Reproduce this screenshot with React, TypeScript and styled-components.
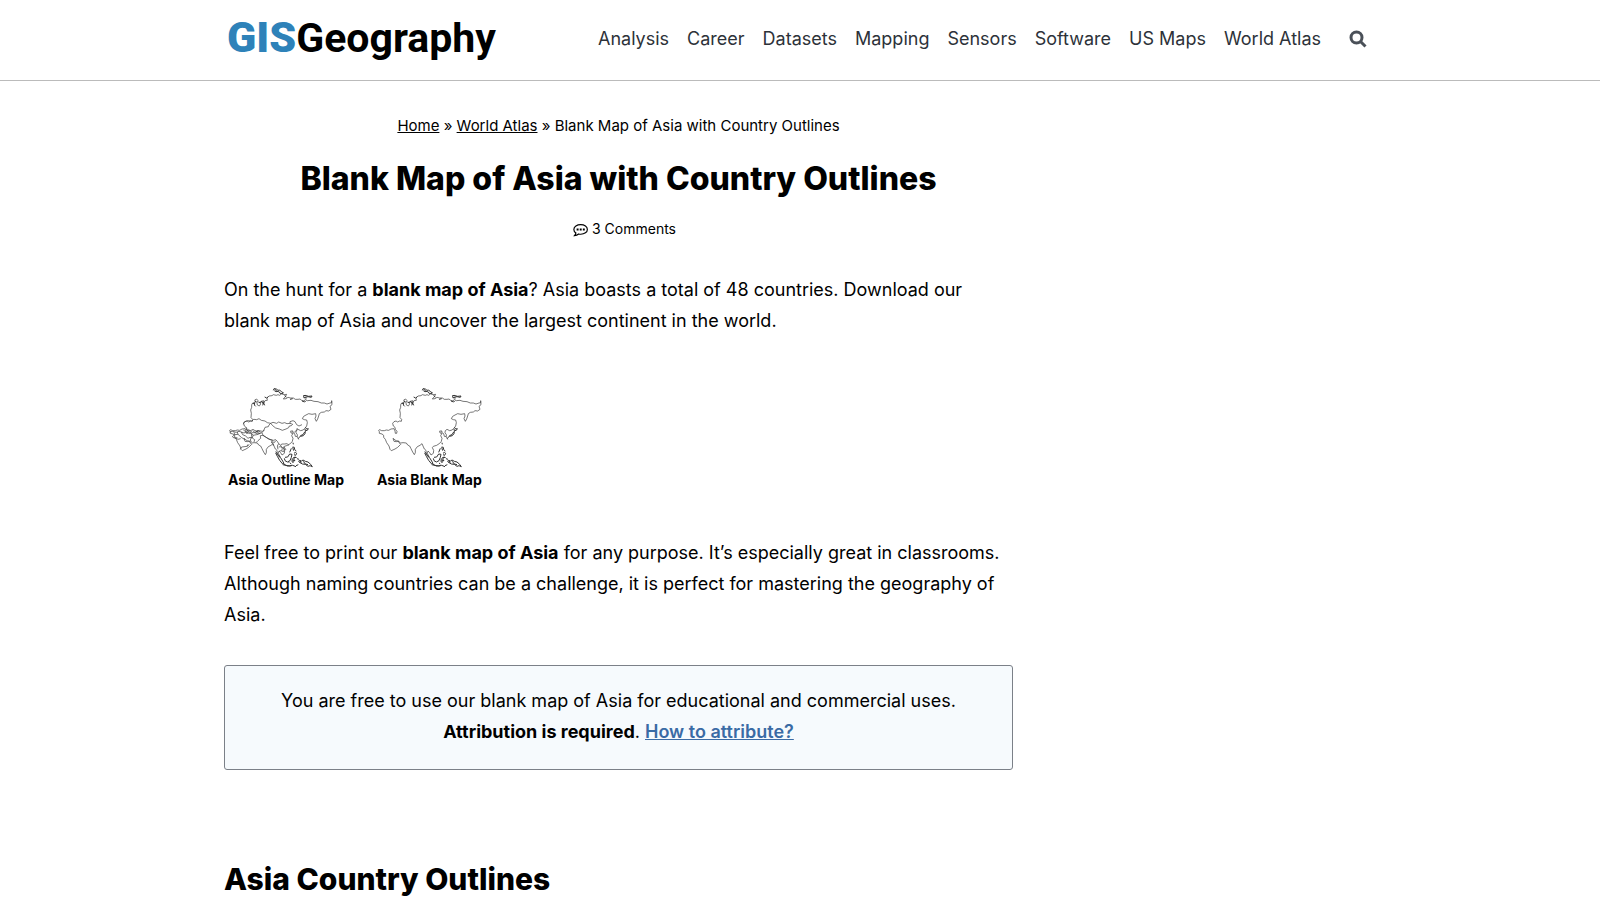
import React from "react";
import styled, { createGlobalStyle } from "styled-components";

const GlobalStyle = createGlobalStyle`
  *, *::before, *::after { box-sizing: border-box; }
  body {
    margin: 0;
    background: #fff;
    color: #000;
    font-family: Inter, "Liberation Sans", sans-serif;
    font-size: 18px;
    line-height: 31px;
  }
`;

const Header = styled.header`
  border-bottom: 1px solid #bbb;
`;

const HeaderInner = styled.div`
  max-width: 1200px;
  min-height: 80px;
  margin: 0 auto;
  padding: 0 24px 4px;
  display: flex;
  align-items: center;
  justify-content: space-between;
`;

const Logo = styled.a`
  padding: 0 3px 2px;
  font-family: Roboto, "Liberation Sans", sans-serif;
  font-size: 41px;
  line-height: 48px;
  font-weight: 700;
  color: #000;
  text-decoration: none;
`;

const LogoMark = styled.span`
  font-size: 43px;
  font-weight: 900;
  color: #2e82b9;
`;

const HeaderRight = styled.div`
  display: flex;
  align-items: center;
  gap: 20px;
`;

const NavList = styled.ul`
  display: flex;
  gap: 18px;
  margin: 0;
  padding: 0;
  list-style: none;
`;

const NavLink = styled.a`
  color: #2d3239;
  text-decoration: none;
  white-space: nowrap;
`;

const SearchButton = styled.button`
  display: flex;
  padding: 9px 9px 7px 8px;
  border: 0;
  background: none;
  color: #4a5058;
  cursor: pointer;
`;

const Page = styled.div`
  max-width: 1200px;
  margin: 0 auto;
  padding: 32px 24px 0;
`;

const Article = styled.main`
  max-width: 789px;
`;

const Breadcrumb = styled.nav`
  font-size: 15px;
  line-height: 26px;
  text-align: center;

  a { color: inherit; }
`;

const Title = styled.h1`
  margin: 16px 0 14px;
  font-size: 32px;
  line-height: 48px;
  font-weight: 800;
  text-align: center;
`;

const Meta = styled.div`
  display: flex;
  justify-content: center;
  align-items: center;
  gap: 4px;
  padding-left: 12px;
  font-size: 14px;
  line-height: 24px;

  a { color: inherit; text-decoration: none; }
`;

const Paragraph = styled.p`
  margin: 0 0 35px;
`;

const Body = styled.div`
  margin-top: 33px;
`;

const Gallery = styled.div`
  display: flex;
  gap: 29px;
  margin: 39px 0 46px;
`;

const Figure = styled.figure`
  width: 120px;
  margin: 0;

  svg { display: block; }
`;

const Caption = styled.figcaption`
  padding-left: 4px;
  font-size: 14px;
  line-height: 22px;
  font-weight: 700;
  white-space: nowrap;
`;

const Notice = styled.aside`
  padding: 19px 20px 22px;
  border: 1px solid #7b8088;
  border-radius: 3px;
  background: #f6fafd;
  text-align: center;

  p { margin: 0; }
  a { color: #3a6ba5; font-weight: 600; }
`;

const SectionTitle = styled.h2`
  margin: 88px 0 0;
  font-size: 30px;
  line-height: 42px;
  font-weight: 800;
`;

const navItems = ["Analysis", "Career", "Datasets", "Mapping", "Sensors", "Software", "US Maps", "World Atlas"];

const coast =
  "M491 181L494 179 500 182 508 182 514 180 521 181 528 177 537 176 540 183 541 190 545 190 546 184 541 178 540 172 535 168 533 160 537 155 543 153 548 156 554 153 559 154 560 148 555 143 556 130 554 120 557 112 557 104 560 99 567 98 569 94 566 90 572 87 576 92 573 98 574 105 580 108 584 102 581 97 586 94 593 92 593 98 597 92 604 91 603 84 609 78 618 77 622 74 631 76 636 74 641 76 647 71 654 74 662 73 658 80 652 87 660 86 666 82 674 84 682 84 688 88 696 88 702 87 707 91 714 93 718 88 724 92 735 91 744 94 756 95 766 99 775 99 783 102 792 99 797 98 797 92 798 104 792 109 795 118 788 123 780 122 775 126 766 127 760 131 758 138 755 147 751 154 747 146 750 138 749 131 738 133 728 131 720 135 713 139 709 146 715 149 722 150 724 158 722 168 717 175 711 180 704 182 696 178 691 182 690 188 694 194 694 200 688 199 686 191 680 187 681 183 674 183 675 189 681 190 677 197 681 205 679 214 674 220 665 226 655 229 652 233 656 241 655 250 648 255 644 248 639 243 637 250 642 260 640 262 634 252 633 241 628 237 624 228 621 221 615 226 607 230 601 238 601 248 598 254 593 246 588 236 584 228 578 225 574 219 564 218 557 219 551 214 543 212 534 205 537 214 544 215 550 213 553 219 557 223 548 232 540 237 529 242 525 238 522 228 515 218 511 208 506 202 506 196 501 192 493 190 493 185z";

const islands =
  "M622 61L624 56 631 57 636 61 641 60 647 66 652 68 649 72 641 69 638 64 630 65 625 62M626 58L632 62M711 78L717 76 728 79 738 78 736 82 726 80 716 82 711 80M713 83L722 84M560 101L566 99 565 105 569 109M577 96L583 98 588 94 590 100 596 96M590 106L593 99 596 106M566 94L572 96M596 81L602 84 607 80M656 76L661 82M672 88L680 86M708 93L716 96 720 92M718 172L722 177 727 176 724 181 718 182 717 177M718 183L717 191 712 197 704 199 698 203M716 186L711 194 703 197M695 202L698 208M681 218L682 223M680 231L685 232 686 239 691 243M680 232L683 242M684 250L688 247 692 250 689 256 684 254M676 235L671 247M629 245L636 254 643 262 650 273 654 281 649 281 641 271 634 259 629 249M650 284L660 286 671 288 680 286 690 290M654 283L664 288 676 287M657 262L665 261 671 252 678 253 676 262 672 272 664 276 657 272 655 265M681 264L688 261 683 267 687 273 682 270 681 278 678 274 679 265M686 262L692 263M695 264L697 270M698 276L700 271 707 273 711 270 718 274 726 276 734 283 739 290 732 287 726 289 718 283 709 282 699 276M712 274L718 282 726 284M702 272L706 280M672 279L676 282M690 287L697 284";

const borders =
  "M88 163L90 156 100 152 114 153 119 148 128 149 135 146 142 151 153 153 160 158 170 160 165 165 163 170 153 172 150 180 145 184 135 182 126 184 117 178 108 183 100 180 97 172M170 160L177 157 188 160 194 156 204 160 212 158 219 161 228 160 228 155 237 152 243 155 248 164 255 168 264 164M170 160L176 167 185 174 196 177 205 181 216 177 224 173 226 168 232 167 236 163 228 160M151 180L144 188 147 196 158 203 168 208 178 211 185 209 190 214M147 196L139 197 140 205 132 212 126 218M139 190L128 194 117 196 115 204 122 209 120 216M147 196L155 201 165 208 175 211 173 216 182 217 185 212M171 217L177 220 178 227M190 214L194 221 200 226 203 222 211 222 219 221 225 226M194 221L190 228 192 238M200 226L204 232 211 236 210 244 203 244M194 231L200 230 205 236 203 242 196 243M210 230L216 240M47 186L56 184 66 187 75 184 82 186 86 194 95 198 102 205 108 202 115 204M60 187L62 194 55 200 60 204 70 203M70 186L72 193 83 203 92 208M62 194L72 193M82 186L90 189 97 186 105 190 113 190 117 196M97 178L104 186 112 188M88 180L97 186M103 178L116 188 128 188M116 182L129 192 139 190 144 188M128 183L136 188M112 190L113 200 109 210 112 216M106 224L99 229 83 231 79 238M99 229L102 223M126 185L132 181 140 187M240 188L248 180 250 174M132 188L124 182M222 276L227 277M64 204L72 208 80 206";

type MapProps = { label: string; withBorders?: boolean };

function AsiaMap({ label, withBorders = false }: MapProps) {
  return (
    <svg width="120" height="94" viewBox="474 15 360 282" fill="none" stroke="#333" strokeWidth="2" strokeLinejoin="round" role="img" aria-label={label}>
      <path d={coast} />
      <path d={islands} strokeWidth="3" />
      {withBorders && <path d={borders} transform="translate(444 0)" />}
    </svg>
  );
}

function SearchIcon() {
  return (
    <svg width="18" height="18" viewBox="0 0 18 18" fill="none" stroke="currentColor" strokeWidth="3" aria-hidden="true">
      <circle cx="7.5" cy="7.5" r="5.5" />
      <path d="M11.5 11.5l5 5" />
    </svg>
  );
}

function CommentIcon() {
  return (
    <svg width="15" height="15" viewBox="0 0 14 14" fill="none" stroke="currentColor" strokeWidth="1.1" aria-hidden="true">
      <path d="M7.2 2.4c3.5 0 6.2 1.9 6.2 4.5s-2.7 4.5-6.2 4.5c-.7 0-1.3-.1-1.9-.2-1 .9-2.3 1.5-3.9 1.5.8-.8 1.2-1.6 1.3-2.5C1.4 9.4.8 8.2.8 6.9c0-2.6 2.9-4.5 6.400-4.500z" />
      <path d="M3.400 7h1.800M6.300 7h1.800M9.200 7h1.800" strokeWidth="1.800" />
    </svg>
  );
}

export default function App() {
  return (
    <>
      <GlobalStyle />
      <Header>
        <HeaderInner>
          <Logo href="#"><LogoMark>GIS</LogoMark>Geography</Logo>
          <HeaderRight>
            <nav aria-label="Primary">
              <NavList>
                {navItems.map((item) => (
                  <li key={item}><NavLink href="#">{item}</NavLink></li>
                ))}
              </NavList>
            </nav>
            <SearchButton type="button" aria-label="Search"><SearchIcon /></SearchButton>
          </HeaderRight>
        </HeaderInner>
      </Header>
      <Page>
        <Article>
          <Breadcrumb aria-label="Breadcrumb">
            <a href="#">Home</a> » <a href="#">World Atlas</a> » Blank Map of Asia with Country Outlines
          </Breadcrumb>
          <Title>Blank Map of Asia with Country Outlines</Title>
          <Meta><CommentIcon /><a href="#comments">3 Comments</a></Meta>
          <Body>
            <Paragraph>
              On the hunt for a <strong>blank map of Asia</strong>? Asia boasts a total of 48 countries. Download our blank map of Asia and uncover the largest continent in the world.
            </Paragraph>
            <Gallery>
              <Figure>
                <AsiaMap label="Outline of Asia with country borders" withBorders />
                <Caption>Asia Outline Map</Caption>
              </Figure>
              <Figure>
                <AsiaMap label="Outline of Asia" />
                <Caption>Asia Blank Map</Caption>
              </Figure>
            </Gallery>
            <Paragraph>
              Feel free to print our <strong>blank map of Asia</strong> for any purpose. It’s especially great in classrooms. Although naming countries can be a challenge, it is perfect for mastering the geography of Asia.
            </Paragraph>
            <Notice>
              <p>
                You are free to use our blank map of Asia for educational and commercial uses. <strong>Attribution is required</strong>. <a href="#">How to attribute?</a>
              </p>
            </Notice>
            <SectionTitle>Asia Country Outlines</SectionTitle>
          </Body>
        </Article>
      </Page>
    </>
  );
}
